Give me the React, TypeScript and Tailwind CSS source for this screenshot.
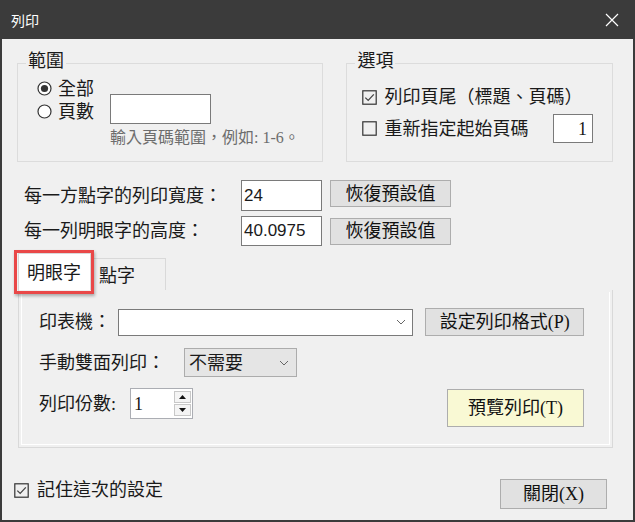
import React from "react";

const cjk = "font-['Liberation_Serif','Noto_Sans_CJK_TC',serif]";

function Radio({ checked }: { checked?: boolean }) {
  return (
    <svg width="15" height="15" viewBox="0 0 15 15" className="shrink-0">
      <circle cx="7.5" cy="7.5" r="6.5" fill="#fff" stroke="#333" strokeWidth="1.2" />
      {checked && <circle cx="7.5" cy="7.5" r="3.6" fill="#333" />}
    </svg>
  );
}

function Check({ checked }: { checked?: boolean }) {
  return (
    <svg width="15" height="15" viewBox="0 0 15 15" className="shrink-0">
      <rect x="0.8" y="0.8" width="13.4" height="13.4" fill="none" stroke="#333" strokeWidth="1.2" />
      {checked && (
        <path d="M3.3 7.6 L6.2 10.4 L11.8 4.4" fill="none" stroke="#444" strokeWidth="1.3" />
      )}
    </svg>
  );
}

function Chevron() {
  return (
    <svg width="10" height="6" viewBox="0 0 10 6" className="shrink-0">
      <path d="M1 1 L5 5 L9 1" fill="none" stroke="#666" strokeWidth="1" />
    </svg>
  );
}

function Btn({ children, className }: { children: React.ReactNode; className: string }) {
  return (
    <div
      className={`flex items-center justify-center border border-[#adadad] text-[18px] leading-none text-[#111] ${className}`}
    >
      {children}
    </div>
  );
}

export default function App() {
  return (
    <div className={`w-[635px] h-[522px] flex flex-col bg-[#f0f0f0] border-x-2 border-b-2 border-[#3b3b3b] overflow-hidden ${cjk}`}>
      {/* title bar */}
      <div className="h-[39px] shrink-0 -mx-[2px] bg-[#3b3b3b] flex items-center justify-between pl-[11px] pr-[16px]">
        <span className="text-white text-[14px] font-['Noto_Sans_CJK_TC',sans-serif] leading-none">列印</span>
        <svg width="14" height="14" viewBox="0 0 14 14">
          <path d="M1 1 L13 13 M13 1 L1 13" stroke="#fff" strokeWidth="1.2" />
        </svg>
      </div>

      <div className="flex-1 flex flex-col pl-[15px] pr-[20px] pt-[24px] text-[#1a1a1a]">
        {/* groups */}
        <div className="flex gap-[23px]">
          <div className="relative w-[307px] h-[99px] border border-[#dcdcdc]">
            <span className="absolute -top-[14px] left-[8px] px-[2px] bg-[#f0f0f0] text-[18px] leading-[22px]">範圍</span>
            <div className="flex pt-[13px] pl-[19px]">
              <div className="w-[73px] flex flex-col">
                <div className="h-[23px] flex items-center gap-[6px] text-[18px] leading-none">
                  <Radio checked />
                  <span>全部</span>
                </div>
                <div className="h-[23px] flex items-center gap-[6px] text-[18px] leading-none">
                  <Radio />
                  <span>頁數</span>
                </div>
              </div>
              <div className="flex flex-col pt-[17px]">
                <div className="w-[101px] h-[30px] bg-white border border-[#7a7a7a]" />
                <div className="mt-[4px] h-[20px] flex items-center text-[16px] leading-none text-[#6d6d6d] whitespace-nowrap">
                  輸入頁碼範圍，例如: 1-6。
                </div>
              </div>
            </div>
          </div>

          <div className="relative w-[267px] h-[99px] border border-[#dcdcdc]">
            <span className="absolute -top-[14px] left-[8px] px-[2px] bg-[#f0f0f0] text-[18px] leading-[22px]">選項</span>
            <div className="flex flex-col pt-[21px] pl-[15px] pr-[19px]">
              <div className="h-[24px] flex items-center gap-[7px] text-[18px] leading-none whitespace-nowrap">
                <Check checked />
                <span>列印頁尾（標題、頁碼）</span>
              </div>
              <div className="mt-[5px] h-[29px] flex items-center gap-[7px] text-[18px] leading-none whitespace-nowrap">
                <Check />
                <span>重新指定起始頁碼</span>
                <div className="ml-auto w-[40px] h-[29px] bg-white border border-[#7a7a7a] flex items-center justify-end pr-[5px]">
                  1
                </div>
              </div>
            </div>
          </div>
        </div>

        {/* width / height rows */}
        <div className="mt-[18px] flex items-center pl-[7px]">
          <span className="w-[217px] text-[18px] leading-none whitespace-nowrap">每一方點字的列印寬度：</span>
          <div className="w-[81px] h-[31px] bg-white border border-[#7a7a7a] flex items-center pl-[2px] text-[17px] font-['Liberation_Sans',sans-serif]">
            24
          </div>
          <Btn className="ml-[8px] w-[121px] h-[27px] bg-[#e1e1e1] self-start">恢復預設值</Btn>
        </div>
        <div className="mt-[5px] flex items-center pl-[7px]">
          <span className="w-[217px] text-[18px] leading-none whitespace-nowrap">每一列明眼字的高度：</span>
          <div className="w-[81px] h-[30px] bg-white border border-[#7a7a7a] flex items-center pl-[2px] text-[17px] font-['Liberation_Sans',sans-serif]">
            40.0975
          </div>
          <Btn className="ml-[8px] w-[121px] h-[27px] bg-[#e1e1e1]">恢復預設值</Btn>
        </div>

        {/* tabs */}
        <div className="mt-[7px] ml-[1px] flex items-end">
          <div className="relative w-[73px] h-[37px] bg-white border border-b-0 border-[#d9d9d9] flex items-center pl-[8px] pt-[2px] text-[18px] leading-none">
            明眼字
            <div className="absolute -left-[5px] -top-[4px] w-[80px] h-[44px] border-[3px] border-[#e94848] shadow-[1px_2px_3px_rgba(0,0,0,0.3)]" />
          </div>
          <div className="w-[75px] h-[32px] border border-l-0 border-b-0 border-[#d9d9d9] flex items-center pl-[8px] pt-[2px] text-[18px] leading-none">
            點字
          </div>
        </div>
        <div className="ml-[1px] w-[595px] h-[158px] border border-t-0 border-[#d9d9d9] p-[2px]">
          <div className="h-full border border-t-0 border-white flex flex-col pt-[16px] pl-[17px] pr-[25px]">
            <div className="flex items-center">
              <span className="w-[80px] text-[18px] leading-none">印表機：</span>
              <div className="w-[300px] h-[27px] bg-white border border-[#7a7a7a] flex items-center justify-end pr-[6px]">
                <Chevron />
              </div>
              <Btn className="ml-[12px] w-[161px] h-[28px] bg-[#e1e1e1]">設定列印格式(P)</Btn>
            </div>
            <div className="mt-[12px] flex items-center">
              <span className="w-[145px] text-[18px] leading-none">手動雙面列印：</span>
              <div className="w-[113px] h-[29px] bg-[#e5e5e5] border border-[#acacac] flex items-center justify-between pl-[4px] pr-[7px] text-[18px] leading-none">
                <span>不需要</span>
                <Chevron />
              </div>
            </div>
            <div className="mt-[11px] flex items-start">
              <span className="w-[91px] h-[31px] flex items-center text-[18px] leading-none">列印份數:</span>
              <div className="w-[63px] h-[31px] bg-white border border-[#abadb3] flex items-center pl-[3px] pr-[1px]">
                <span className="flex-1 text-[18px] leading-none">1</span>
                <div className="flex flex-col gap-[1px]">
                  <div className="w-[17px] h-[12px] bg-[#f4f4f4] border border-[#c8c8c8] flex items-center justify-center">
                    <svg width="7" height="4" viewBox="0 0 7 4">
                      <path d="M0 4 L3.5 0 L7 4 Z" fill="#111" />
                    </svg>
                  </div>
                  <div className="w-[17px] h-[12px] bg-[#f4f4f4] border border-[#c8c8c8] flex items-center justify-center">
                    <svg width="7" height="4" viewBox="0 0 7 4">
                      <path d="M0 0 L7 0 L3.5 4 Z" fill="#111" />
                    </svg>
                  </div>
                </div>
              </div>
              <Btn className="ml-auto w-[137px] h-[38px] mt-[1px] bg-[#f9f9d4]">預覽列印(T)</Btn>
            </div>
          </div>
        </div>

        {/* bottom */}
        <div className="mt-[31px] flex items-start justify-between">
          <div className="-ml-[3px] mt-[1px] h-[20px] flex items-center gap-[8px] text-[18px] leading-none">
            <Check checked />
            <span>記住這次的設定</span>
          </div>
          <Btn className="mr-[6px] w-[107px] h-[30px] bg-[#e1e1e1]">關閉(X)</Btn>
        </div>
      </div>
    </div>
  );
}
